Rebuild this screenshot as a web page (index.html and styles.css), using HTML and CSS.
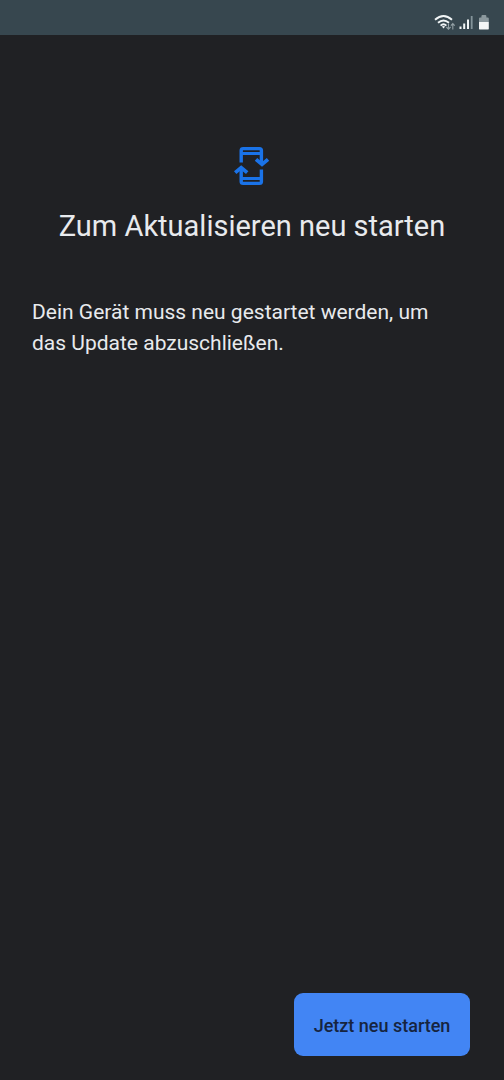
FILE: index.html
```html
<!DOCTYPE html>
<html lang="de">
<head>
<meta charset="utf-8">
<meta name="viewport" content="width=device-width, initial-scale=1">
<title>Zum Aktualisieren neu starten</title>
<link rel="stylesheet" href="styles.css">
</head>
<body>
<div class="screen">
  <header class="status-bar">
    <svg class="status-icons" viewBox="0 0 56 18" aria-hidden="true">
      <g fill="none" stroke="#f1f5f6" stroke-width="1.9">
        <path d="M1 5.8Q9.5-1.8 18 5.8"/>
        <path d="M4 8.8Q9.5 4 15 8.8"/>
        <path d="M6.6 11.6Q9.5 9 12.4 11.6"/>
      </g>
      <path d="M7.8 12.6Q9.5 11.4 11.2 12.6L9.5 14.4Z" fill="#f1f5f6"/>
      <path d="M14.5 9.5v5.6M12.4 13l2.1 2.2 2.1-2.2M18.8 15.4V9.6M16.9 11.7l1.9-2.1 1.9 2.1" fill="none" stroke="#93a0a5" stroke-width="1.1"/>
      <g fill="#f1f5f6">
        <rect x="25.5" y="12.5" width="2" height="2.5"/>
        <rect x="29.2" y="9.5" width="2" height="5.5"/>
        <rect x="33" y="5.5" width="2" height="9.5"/>
      </g>
      <rect x="36.8" y="2" width="1.8" height="13" fill="#84949a"/>
      <path d="M45 8V4.5Q45 3.4 46.1 3.4H47.4V2.2Q47.4 1 48.6 1H51.2Q52.4 1 52.4 2.2V3.4H53.7Q54.8 3.4 54.8 4.5V8Z" fill="#8b989d"/>
      <path d="M45 8H54.8V14.4Q54.8 15.6 53.6 15.6H46.2Q45 15.6 45 14.4Z" fill="#f4f6f6"/>
    </svg>
  </header>
  <main class="content">
    <svg class="update-icon" viewBox="0 0 36 40" fill="none" stroke="#1a73e8" stroke-width="3.4" aria-hidden="true">
      <path d="M7.2 16.5V4.5Q7.2 2.6 9.1 2.6H25.5Q27.4 2.6 27.4 4.5V17"/>
      <path d="M7.2 7.4H27.4M7.2 32.6H27.4" stroke-width="3"/>
      <path d="M27.4 23.5V35.5Q27.4 37.4 25.5 37.4H9.1Q7.2 37.4 7.2 35.5V22"/>
      <path d="M22 13.4L28 18.4L34 13.4M1.2 26.6L7.2 21.6L13.2 26.6" stroke-width="3.8"/>
    </svg>
    <h1 class="title">Zum Aktualisieren neu starten</h1>
    <p class="message">Dein Gerät muss neu gestartet werden, um das Update abzuschließen.</p>
  </main>
  <footer class="actions">
    <button class="restart" type="button">Jetzt neu starten</button>
  </footer>
</div>
</body>
</html>
```
FILE: styles.css
```css
* {
  box-sizing: border-box;
}

body {
  margin: 0;
  background: #202124;
  color: #e8eaed;
  font-family: Roboto, sans-serif;
}

.screen {
  display: flex;
  flex-direction: column;
  min-height: 100vh;
}

.status-bar {
  display: flex;
  justify-content: flex-end;
  align-items: flex-end;
  height: 35px;
  padding: 0 14px 3px 0;
  background: #37474f;
}

.status-icons {
  width: 56px;
  height: 18px;
}

.content {
  display: flex;
  flex: 1;
  flex-direction: column;
  padding: 111px 32px 0;
}

.update-icon {
  align-self: center;
  width: 36px;
  height: 40px;
}

.title {
  margin: 20px 0 0;
  font-size: 29px;
  font-weight: 400;
  line-height: 40px;
  text-align: center;
}

.message {
  margin: 51px 0 0;
  padding-right: 16px;
  font-size: 21px;
  line-height: 31px;
}

.actions {
  display: flex;
  justify-content: flex-end;
  padding: 24px 34px;
}

.restart {
  min-width: 176px;
  height: 63px;
  padding: 2px 18px 0;
  border: 0;
  border-radius: 9px;
  background: #4285f4;
  color: #16243f;
  font-family: inherit;
  font-size: 18px;
  font-weight: 500;
}
```
